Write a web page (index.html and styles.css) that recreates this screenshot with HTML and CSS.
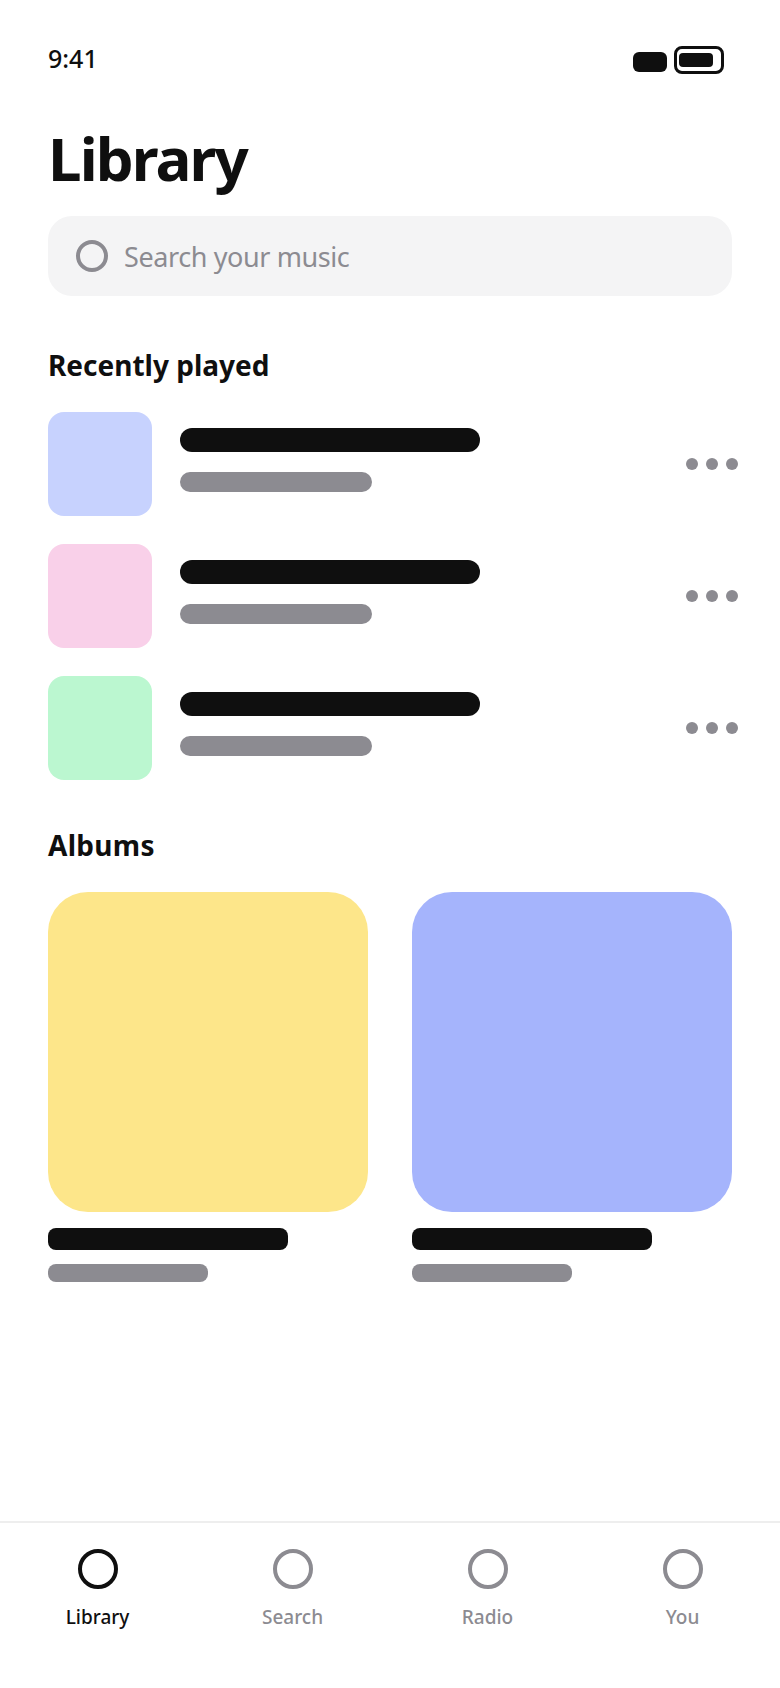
FILE: index.html
```html
<!DOCTYPE html>
<html lang="en">
<head>
  <meta charset="UTF-8">
  <meta name="viewport" content="width=device-width, initial-scale=1.0">
  <title>Library</title>
  <link rel="stylesheet" href="styles.css">
</head>
<body>
  <div class="screen">
    <!-- Status bar -->
    <div class="status-bar">
      <span class="time">9:41</span>
      <div class="status-icons">
        <span class="signal"></span>
        <span class="battery"><span class="battery-fill"></span></span>
      </div>
    </div>

    <!-- Main Content -->
    <div class="content">
      <h1>Library</h1>

      <div class="search-box">
        <span class="ring search-ring"></span>
        <span class="search-text">Search your music</span>
      </div>

      <h2 class="recent-title">Recently played</h2>
      <div class="track-list">
        <div class="track">
          <div class="thumb thumb-blue"></div>
          <div class="track-lines">
            <div class="line-title"></div>
            <div class="line-sub"></div>
          </div>
          <div class="more"><span></span><span></span><span></span></div>
        </div>
        <div class="track">
          <div class="thumb thumb-pink"></div>
          <div class="track-lines">
            <div class="line-title"></div>
            <div class="line-sub"></div>
          </div>
          <div class="more"><span></span><span></span><span></span></div>
        </div>
        <div class="track">
          <div class="thumb thumb-green"></div>
          <div class="track-lines">
            <div class="line-title"></div>
            <div class="line-sub"></div>
          </div>
          <div class="more"><span></span><span></span><span></span></div>
        </div>
      </div>

      <h2 class="albums-title">Albums</h2>
      <div class="album-grid">
        <div class="album">
          <div class="cover cover-yellow"></div>
          <div class="album-title"></div>
          <div class="album-sub"></div>
        </div>
        <div class="album">
          <div class="cover cover-blue"></div>
          <div class="album-title"></div>
          <div class="album-sub"></div>
        </div>
      </div>
    </div>

    <!-- Bottom nav -->
    <div class="tab-bar">
      <div class="tab active"><span class="ring tab-ring"></span><span>Library</span></div>
      <div class="tab"><span class="ring tab-ring"></span><span>Search</span></div>
      <div class="tab"><span class="ring tab-ring"></span><span>Radio</span></div>
      <div class="tab"><span class="ring tab-ring"></span><span>You</span></div>
    </div>
  </div>
</body>
</html>
```

FILE: styles.css
```css
/* Global Styles */
* {
  box-sizing: border-box;
}

body {
  margin: 0;
  background-color: #ffffff;
  color: #0f0f0f;
  font-family: "Noto Sans", "Open Sans", sans-serif;
}

.screen {
  width: 780px;
  height: 1688px;
  display: flex;
  flex-direction: column;
  overflow: hidden;
}

/* Status bar */
.status-bar {
  height: 60px;
  margin-top: 44px;
  padding: 0 56px 0 48px;
  display: flex;
  align-items: flex-start;
  justify-content: space-between;
}

.time {
  font-size: 25px;
  font-weight: 500;
  line-height: 28px;
}

.status-icons {
  display: flex;
  gap: 7px;
  margin-top: 2px;
}

.signal {
  width: 34px;
  height: 20px;
  margin-top: 6px;
  background-color: #0f0f0f;
  border-radius: 6px;
}

.battery {
  width: 50px;
  height: 28px;
  padding: 4px 2px;
  border: 3px solid #0f0f0f;
  border-radius: 8px;
  display: block;
}

.battery-fill {
  display: block;
  width: 34px;
  height: 14px;
  background-color: #0f0f0f;
  border-radius: 4px;
}

/* Main Content */
.content {
  flex: 1;
  padding: 0 48px;
}

h1 {
  margin: 18px 0 0;
  font-size: 60px;
  font-weight: 700;
  line-height: 72px;
  letter-spacing: -1.9px;
}

h2 {
  margin: 0;
  font-size: 28px;
  font-weight: 700;
  line-height: 36px;
}

.ring {
  display: block;
  border-style: solid;
  border-radius: 50%;
}

/* Search */
.search-box {
  height: 80px;
  margin-top: 22px;
  padding: 0 28px;
  display: flex;
  align-items: center;
  gap: 16px;
  background-color: #f4f4f5;
  border-radius: 24px;
}

.search-ring {
  width: 32px;
  height: 32px;
  border-width: 4px;
  border-color: #8c8b91;
}

.search-text {
  font-size: 27px;
  letter-spacing: -0.4px;
  color: #8c8b91;
}

/* Recently played */
.recent-title {
  margin-top: 51px;
}

.track-list {
  margin-top: 29px;
  display: flex;
  flex-direction: column;
  gap: 28px;
}

.track {
  display: flex;
  align-items: center;
  gap: 28px;
}

.thumb {
  width: 104px;
  height: 104px;
  border-radius: 16px;
}

.thumb-blue {
  background-color: #c7d2fe;
}

.thumb-pink {
  background-color: #f9d0e9;
}

.thumb-green {
  background-color: #bbf7d0;
}

.track-lines {
  flex: 1;
  padding-bottom: 8px;
}

.line-title {
  width: 300px;
  height: 24px;
  background-color: #0f0f0f;
  border-radius: 12px;
}

.line-sub {
  width: 192px;
  height: 20px;
  margin-top: 20px;
  background-color: #8c8b91;
  border-radius: 10px;
}

.more {
  display: flex;
  gap: 8px;
  margin-right: -6px;
}

.more span {
  width: 12px;
  height: 12px;
  background-color: #8c8b91;
  border-radius: 50%;
}

/* Albums */
.albums-title {
  margin-top: 47px;
  letter-spacing: 0.3px;
}

.album-grid {
  margin-top: 29px;
  display: grid;
  grid-template-columns: 320px 320px;
  gap: 44px;
}

.cover {
  width: 320px;
  height: 320px;
  border-radius: 40px;
}

.cover-yellow {
  background-color: #fde68a;
}

.cover-blue {
  background-color: #a5b4fc;
}

.album-title {
  width: 240px;
  height: 22px;
  margin-top: 16px;
  background-color: #0f0f0f;
  border-radius: 8px;
}

.album-sub {
  width: 160px;
  height: 18px;
  margin-top: 14px;
  background-color: #8c8b91;
  border-radius: 8px;
}

/* Bottom nav */
.tab-bar {
  height: 167px;
  padding-top: 26px;
  display: grid;
  grid-template-columns: repeat(4, 1fr);
  border-top: 2px solid #eeeeee;
}

.tab {
  display: flex;
  flex-direction: column;
  align-items: center;
  gap: 14px;
  font-size: 19px;
  font-weight: 500;
  line-height: 28px;
  color: #8c8b91;
}

.tab-ring {
  width: 40px;
  height: 40px;
  border-width: 4px;
  border-color: #8c8b91;
}

.tab.active {
  color: #0f0f0f;
}

.tab.active .tab-ring {
  border-color: #0f0f0f;
}
```
